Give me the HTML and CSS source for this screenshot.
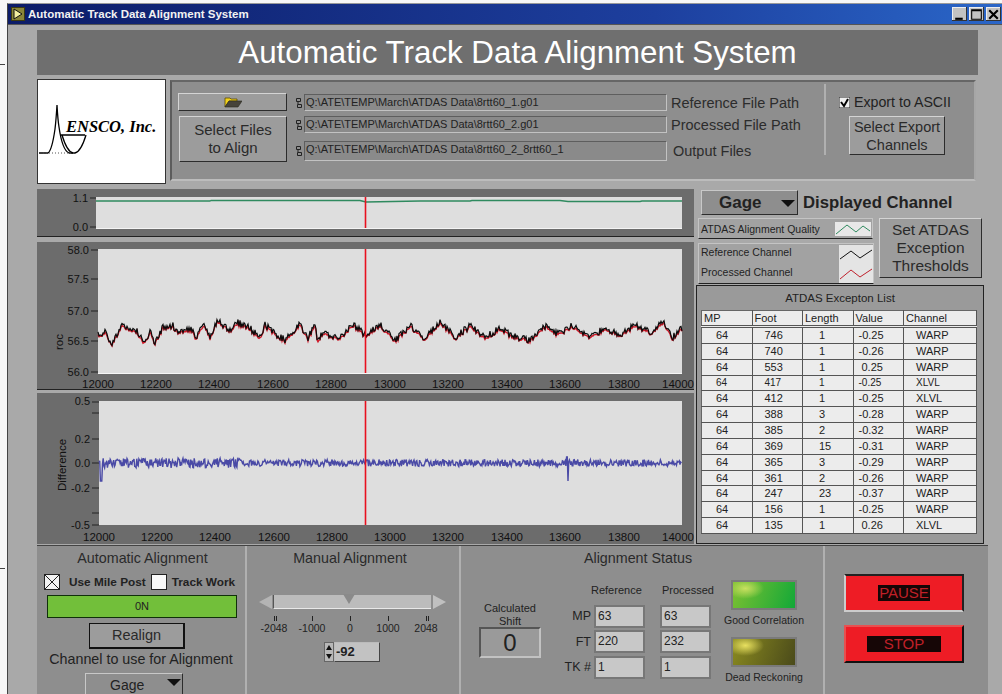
FILE: index.html
```html
<!DOCTYPE html>
<html lang="en">
<head>
    <meta charset="UTF-8">
    <title>Automatic Track Data Alignment System</title>
    <link rel="stylesheet" href="styles.css">
</head>
<body>
<div class="window">
    <div class="titlebar">
        <svg class="app-icon" viewBox="0 0 14 14"><rect width="14" height="14" fill="#3c3a10"/><rect x="1" y="1" width="12" height="12" fill="#8a8638"/><path d="M3 2l8 5-8 5z" fill="#f4f0a0" stroke="#111" stroke-width="1"/></svg>
        <span class="title-text">Automatic Track Data Alignment System</span>
        <div class="win-buttons">
            <div class="win-btn"><svg viewBox="0 0 14 14"><rect x="3" y="10" width="7" height="2" fill="#000"/></svg></div>
            <div class="win-btn"><svg viewBox="0 0 14 14"><path d="M2.500 2.500h9v9h-9z M2.500 3.500h9" fill="none" stroke="#000"/></svg></div>
            <div class="win-btn"><svg viewBox="0 0 14 14"><path d="M3 3l8 8M11 3l-8 8" stroke="#000" stroke-width="2"/></svg></div>
        </div>
    </div>

    <div class="content">
        <h1 class="header">Automatic Track Data Alignment System</h1>

        <div class="top-row">
            <div class="logo">
                <svg viewBox="37 79 129 105">
                    <path d="M39 153h9c3-2 5-10 7-24 1-8 1.500-16 2-24 .5 9 1 16 2 22 2 14 5 24 10 26h6c4-1 8-8 11-18" fill="none" stroke="#000" stroke-width="1.300"/>
                    <path d="M61 135h24M62 135c3 10 6 17 11 18" fill="none" stroke="#000" stroke-width="1.300"/>
                    <path d="M43 153h32" stroke="#555" stroke-width="1" stroke-dasharray="1 2"/>
                    <text x="66" y="132" class="logo-text">ENSCO, Inc.</text>
                </svg>
            </div>
            <div class="file-panel">
                <div class="file-buttons">
                    <div class="btn folder-btn">
                        <svg viewBox="0 0 18 11" width="18" height="11"><path d="M1 10V1h5l1 1h6v2H5z" fill="#f2d21c" stroke="#5a4a00" stroke-width=".8"/><path d="M1 10l4-6h13l-4 6z" fill="#46433a" stroke="#2a2a20" stroke-width=".6"/></svg>
                    </div>
                    <div class="btn select-btn">Select Files<br>to Align</div>
                </div>
                <div class="paths">
                    <div class="path-row">
                        <svg class="path-icon" viewBox="0 0 8 12"><path d="M1.500 1.500h4v3h-4zM3 4.500v2.500M2.500 7.500h4v3h-4z" fill="none" stroke="#222"/></svg>
                        <div class="path-field">Q:\ATE\TEMP\March\ATDAS Data\8rtt60_1.g01</div>
                        <span class="path-label">Reference File Path</span>
                    </div>
                    <div class="path-row">
                        <svg class="path-icon" viewBox="0 0 8 12"><path d="M1.500 1.500h4v3h-4zM3 4.500v2.500M2.500 7.500h4v3h-4z" fill="none" stroke="#222"/></svg>
                        <div class="path-field">Q:\ATE\TEMP\March\ATDAS Data\8rtt60_2.g01</div>
                        <span class="path-label">Processed File Path</span>
                    </div>
                    <div class="path-row path-row-output">
                        <svg class="path-icon" viewBox="0 0 8 12"><path d="M1.500 1.500h4v3h-4zM3 4.500v2.500M2.500 7.500h4v3h-4z" fill="none" stroke="#222"/></svg>
                        <div class="path-field">Q:\ATE\TEMP\March\ATDAS Data\8rtt60_2_8rtt60_1</div>
                        <span class="path-label output-label">Output Files</span>
                    </div>
                </div>
                <div class="export-box">
                    <div class="export-check">
                        <svg class="checkbox" viewBox="0 0 11 11"><rect width="11" height="11" fill="#eee" stroke="#222"/><path d="M2 5l3 4 4-7" fill="none" stroke="#000" stroke-width="2"/></svg>
                        <span>Export to ASCII</span>
                    </div>
                    <div class="btn export-btn">Select Export<br>Channels</div>
                </div>
            </div>
        </div>

        <div class="middle">
            <div class="charts">
                <div class="chart chart-quality">
                    <svg viewBox="37 189 657 47">
                        <rect x="96" y="197" width="586" height="31" fill="#dedede"/>
                        <path d="M96 228.500h586" stroke="#f4f4f4"/>
                        <g class="ticks" stroke="#222"><path d="M90 198h6M90 227h6"/></g>
                        <text class="y-label" x="88" y="202">1.1</text>
                        <text class="y-label" x="88" y="231">0.0</text>
                        <polyline id="trace-quality" fill="none" stroke="#2f8a5f" stroke-width="1.300"/>
                        <path class="cursor" d="M365.500 197v31"/>
                    </svg>
                </div>
                <div class="chart chart-roc">
                    <svg viewBox="37 242 657 147">
                        <rect x="98" y="249" width="584" height="124" fill="#dedede"/>
                        <path d="M98 373.500h584" stroke="#f6f6f6"/>
                        <path d="M91 250h7M91 279h7M91 311h7M91 341h7M91 372h7" stroke="#222"/>
                        <text class="y-label" x="89" y="254">58.0</text>
                        <text class="y-label" x="89" y="283">57.5</text>
                        <text class="y-label" x="89" y="315">57.0</text>
                        <text class="y-label" x="89" y="345">56.5</text>
                        <text class="y-label" x="89" y="376">56.0</text>
                        <text class="axis-name" transform="translate(63 342) rotate(-90)">roc</text>
                        <g class="x-labels">
                            <text x="98" y="388">12000</text><text x="156" y="388">12200</text><text x="214" y="388">12400</text><text x="273" y="388">12600</text><text x="331" y="388">12800</text><text x="390" y="388">13000</text><text x="448" y="388">13200</text><text x="507" y="388">13400</text><text x="565" y="388">13600</text><text x="624" y="388">13800</text><text x="678" y="388">14000</text>
                        </g>
                        <polyline id="trace-processed" fill="none" stroke="#d01828" stroke-width="1.400"/>
                        <polyline id="trace-reference" fill="none" stroke="#0c0c0c" stroke-width="1.200"/>
                        <path class="cursor" d="M365.500 249v124"/>
                    </svg>
                </div>
                <div class="chart chart-diff">
                    <svg viewBox="37 393 657 151">
                        <rect x="99" y="401" width="583" height="124" fill="#dedede"/>
                        <path d="M92 402h7M92 413h7M92 439h7M92 463h7M92 488h7M92 513h7M92 525h7" stroke="#222"/>
                        <text class="y-label" x="90" y="405">0.5</text>
                        <text class="y-label" x="90" y="443">0.2</text>
                        <text class="y-label" x="90" y="467">0.0</text>
                        <text class="y-label" x="90" y="492">-0.2</text>
                        <text class="y-label" x="90" y="529">-0.5</text>
                        <text class="axis-name" transform="translate(66 465) rotate(-90)">Difference</text>
                        <g class="x-labels">
                            <text x="99" y="541">12000</text><text x="157" y="541">12200</text><text x="215" y="541">12400</text><text x="274" y="541">12600</text><text x="332" y="541">12800</text><text x="390" y="541">13000</text><text x="448" y="541">13200</text><text x="507" y="541">13400</text><text x="565" y="541">13600</text><text x="624" y="541">13800</text><text x="678" y="541">14000</text>
                        </g>
                        <polyline id="trace-diff" fill="none" stroke="#4a4aa6" stroke-width="1.400"/>
                        <path class="cursor" d="M365.500 401v124"/>
                    </svg>
                </div>
            </div>

            <div class="side">
                <div class="channel-row">
                    <div class="dropdown channel-dropdown">Gage<i class="arrow"></i></div>
                    <span class="channel-label">Displayed Channel</span>
                </div>
                <div class="legend-row">
                    <div class="legends">
                        <div class="legend legend-quality">
                            <span>ATDAS Alignment Quality</span>
                            <svg viewBox="0 0 36 14" class="legend-swatch"><rect width="36" height="14" fill="#e8e8e8"/><path d="M1 12l11-9 9 7 7-6 7 5" fill="none" stroke="#2f8a5f"/></svg>
                        </div>
                        <div class="legend legend-channels">
                            <div class="legend-names"><span>Reference Channel</span><span>Processed Channel</span></div>
                            <svg viewBox="0 0 34 38" class="legend-swatch-tall"><rect width="34" height="38" fill="#e4e4e4"/><path d="M1 14l11-8 9 7 6-4 6-4" fill="none" stroke="#111"/><path d="M1 34l11-9 9 7 6-4 6-4" fill="none" stroke="#c0202c"/></svg>
                        </div>
                    </div>
                    <div class="btn thresholds-btn">Set ATDAS<br>Exception<br>Thresholds</div>
                </div>

                <div class="exception-panel">
                    <div class="exception-title">ATDAS Excepton List</div>
                    <table class="exception-table">
                        <thead>
                            <tr><th>MP</th><th>Foot</th><th>Length</th><th>Value</th><th>Channel</th></tr>
                        </thead>
                        <tbody>
                            <tr><td>64</td><td>746</td><td>1</td><td>-0.25</td><td>WARP</td></tr>
                            <tr><td>64</td><td>740</td><td>1</td><td>-0.26</td><td>WARP</td></tr>
                            <tr><td>64</td><td>553</td><td>1</td><td class="pos">0.25</td><td>WARP</td></tr>
                            <tr class="small-row"><td>64</td><td>417</td><td>1</td><td>-0.25</td><td>XLVL</td></tr>
                            <tr><td>64</td><td>412</td><td>1</td><td>-0.25</td><td>XLVL</td></tr>
                            <tr><td>64</td><td>388</td><td>3</td><td>-0.28</td><td>WARP</td></tr>
                            <tr><td>64</td><td>385</td><td>2</td><td>-0.32</td><td>WARP</td></tr>
                            <tr><td>64</td><td>369</td><td>15</td><td>-0.31</td><td>WARP</td></tr>
                            <tr><td>64</td><td>365</td><td>3</td><td>-0.29</td><td>WARP</td></tr>
                            <tr><td>64</td><td>361</td><td>2</td><td>-0.26</td><td>WARP</td></tr>
                            <tr><td>64</td><td>247</td><td>23</td><td>-0.37</td><td>WARP</td></tr>
                            <tr><td>64</td><td>156</td><td>1</td><td>-0.25</td><td>WARP</td></tr>
                            <tr><td>64</td><td>135</td><td>1</td><td class="pos">0.26</td><td>XLVL</td></tr>
                        </tbody>
                    </table>
                </div>
            </div>
        </div>

        <div class="bottom">
            <section class="section auto-section">
                <div class="section-title">Automatic Alignment</div>
                <div class="mode-row">
                    <svg class="mode-box" viewBox="0 0 16 16"><rect x=".5" y=".5" width="15" height="15" fill="#f2f2f2" stroke="#222"/><path d="M1 1l14 14M15 1L1 15" stroke="#222"/></svg>
                    <span class="mode-text first">Use Mile Post</span>
                    <svg class="mode-box" viewBox="0 0 16 16"><rect x=".5" y=".5" width="15" height="15" fill="#fafafa" stroke="#222"/></svg>
                    <span class="mode-text">Track Work</span>
                </div>
                <div class="on-bar">0N</div>
                <div class="btn realign-btn">Realign</div>
                <div class="channel-use">Channel to use for Alignment</div>
                <div class="dropdown align-dropdown">Gage<i class="arrow"></i></div>
            </section>

            <section class="section manual-section">
                <div class="section-title">Manual Alignment</div>
                <div class="slider">
                    <i class="slider-left"></i>
                    <div class="slider-track"><i class="slider-thumb"></i></div>
                    <i class="slider-right"></i>
                </div>
                <div class="slider-scale">
                    <span class="end-tick">-2048</span><span>-1000</span><span>0</span><span>1000</span><span class="end-tick">2048</span>
                </div>
                <div class="numeric">
                    <div class="spinner"><i class="spin-up"></i><i class="spin-down"></i></div>
                    <div class="numeric-field">-92</div>
                </div>
            </section>

            <section class="section status-section">
                <div class="section-title">Alignment Status</div>
                <div class="status-body">
                    <div class="shift">
                        <div class="shift-label">Calculated<br>Shift</div>
                        <div class="shift-value">0</div>
                    </div>
                    <div class="status-grid">
                        <span></span><span class="col-head col-head-ref">Reference</span><span class="col-head">Processed</span>
                        <span class="row-head">MP</span><div class="status-field">63</div><div class="status-field">63</div>
                        <span class="row-head">FT</span><div class="status-field">220</div><div class="status-field">232</div>
                        <span class="row-head">TK #</span><div class="status-field">1</div><div class="status-field">1</div>
                    </div>
                    <div class="leds">
                        <div class="led led-green"></div>
                        <span class="led-label">Good Correlation</span>
                        <div class="led led-olive"></div>
                        <span class="led-label">Dead Reckoning</span>
                    </div>
                </div>
            </section>

            <section class="section control-section">
                <div class="control-btn pause-btn"><span>PAUSE</span></div>
                <div class="control-btn stop-btn"><span>STOP</span></div>
            </section>
        </div>
    </div>
</div>
<script src="charts.js"></script>
</body>
</html>
```

FILE: styles.css
```css
html, body {
    margin: 0;
    height: 694px;
    overflow: hidden;
    background: #f7f7f7;
}
body {
    font-family: "Liberation Sans", Arial, sans-serif;
    color: #222;
    /* stray marks left of the window in the screenshot */
    background-image: linear-gradient(#444, #444), linear-gradient(#444, #444);
    background-repeat: no-repeat;
    background-size: 5px 1px;
    background-position: 0 64px, 0 568px;
}
.window {
    margin: 3px 0 0 7px;
    height: 691px;
    box-sizing: border-box;
    background: #a9a9a9;
    border-left: 1px solid #444;
    border-top: 1px solid #999;
    position: relative;
}
.titlebar {
    height: 21px;
    display: flex;
    align-items: center;
    background: linear-gradient(to right, #0c1c68, #1d3f9e 65%, #2a66c8);
    border-bottom: 1px solid #555;
    box-sizing: border-box;
    padding: 0 1px 0 3px;
}
.app-icon {
    width: 14px;
    height: 14px;
}
.title-text {
    margin-left: 3px;
    color: #f2f2f2;
    font-size: 11.500px;
    font-weight: bold;
}
.win-buttons {
    margin-left: auto;
    display: flex;
    gap: 2px;
}
.win-btn {
    width: 15px;
    height: 14px;
    background: #c2c2c2;
    box-shadow: inset -1px -1px 0 #333, inset 1px 1px 0 #eee;
}
.win-btn svg {
    display: block;
}
.content {
    padding: 5px 0 0 29px;
}
.header {
    margin: 0;
    box-sizing: border-box;
    width: 941px;
    height: 45px;
    padding-left: 20px;
    background: #6f6f6f;
    color: #fff;
    font-size: 31.300px;
    font-weight: normal;
    line-height: 45px;
    text-align: center;
}
.top-row {
    display: flex;
    gap: 4px;
    margin-top: 4px;
    height: 105px;
}
.logo {
    width: 129px;
    height: 105px;
    background: #fff;
    box-sizing: border-box;
    box-shadow: inset 0 0 0 1px #333;
}
.logo svg {
    display: block;
    width: 129px;
    height: 105px;
}
.logo-text {
    font-family: "Liberation Serif", serif;
    font-size: 16.500px;
    font-weight: bold;
    font-style: italic;
    fill: #000;
}
.file-panel {
    width: 806px;
    height: 101px;
    margin-top: 1px;
    box-sizing: border-box;
    display: flex;
    background: #8e8e8e;
    border-left: 2px solid #5c5c5c;
    border-top: 2px solid #666;
    border-right: 2px solid #a6a6a6;
    border-bottom: 2px solid #bcbcbc;
    padding-left: 6px;
}
.btn {
    box-sizing: border-box;
    background: #9c9c9c;
    border: 1px solid;
    border-color: #d4d4d4 #2c2c2c #2c2c2c #d4d4d4;
    text-align: center;
    color: #2a2a2a;
}
.file-buttons {
    width: 109px;
    padding-top: 11px;
}
.folder-btn {
    height: 18px;
    display: flex;
    align-items: center;
    justify-content: center;
}
.select-btn {
    margin: 5px 0 0 1px;
    height: 46px;
    font-size: 15px;
    line-height: 18px;
    padding-top: 4px;
}
.paths {
    width: 516px;
    margin-left: 8px;
    padding-top: 12px;
}
.path-row {
    display: flex;
    align-items: center;
    height: 17px;
    margin-bottom: 5px;
}
.path-row-output {
    height: 20px;
    margin-top: 8px;
}
.path-icon {
    width: 8px;
    height: 12px;
    flex: none;
    margin-right: 1px;
}
.path-field {
    width: 363px;
    height: 100%;
    box-sizing: border-box;
    background: #8a8a8a;
    border: 1px solid;
    border-color: #5e5e5e #c2c2c2 #c2c2c2 #5e5e5e;
    font-size: 11px;
    line-height: 15px;
    padding-left: 1px;
    white-space: nowrap;
}
.path-label {
    margin-left: 4px;
    font-size: 14.500px;
    color: #2c2c2c;
    white-space: nowrap;
}
.output-label {
    margin-left: 6px;
}
.export-box {
    margin-left: 13px;
    padding: 10px 0 0 13px;
    border-left: 2px solid #b0b0b0;
    height: 61px;
    margin-top: 2px;
}
.export-check {
    display: flex;
    align-items: center;
    gap: 4px;
    font-size: 14.200px;
    white-space: nowrap;
}
.checkbox {
    width: 11px;
    height: 11px;
}
.export-btn {
    width: 96px;
    height: 39px;
    margin: 6px 0 0 10px;
    font-size: 14.500px;
    line-height: 18px;
    padding-top: 1px;
}
.middle {
    display: flex;
    margin-top: 5px;
    height: 355px;
}
.charts {
    width: 657px;
    flex: none;
}
.chart {
    background: #6c6c6c;
    border-bottom: 1px solid #222;
}
.chart svg {
    display: block;
    width: 657px;
    height: 100%;
}
.chart-quality {
    height: 47px;
}
.chart-roc {
    height: 147px;
    margin-top: 5px;
}
.chart-diff {
    height: 151px;
    margin-top: 3px;
    border-bottom: 0;
}
.cursor {
    stroke: #e8101e;
    stroke-width: 1.600;
}
.y-label {
    font-size: 11px;
    text-anchor: end;
    fill: #111;
}
.axis-name {
    font-size: 11.500px;
    text-anchor: middle;
    fill: #111;
}
.x-labels text {
    font-size: 11.500px;
    text-anchor: middle;
    fill: #111;
}
.side {
    width: 292px;
    padding-top: 1px;
}
.channel-row {
    display: flex;
    align-items: center;
    height: 25px;
    margin-left: 7px;
}
.dropdown {
    box-sizing: border-box;
    position: relative;
    background: #8e8e8e;
    border: 1px solid;
    border-color: #c8c8c8 #2c2c2c #2c2c2c #c8c8c8;
}
.channel-dropdown {
    width: 97px;
    height: 25px;
    font-size: 17px;
    font-weight: bold;
    line-height: 24px;
    padding-left: 17px;
}
.arrow {
    position: absolute;
    right: 2px;
    top: 9px;
    border-left: 7px solid transparent;
    border-right: 7px solid transparent;
    border-top: 7px solid #111;
}
.channel-label {
    margin-left: 5px;
    font-size: 16.700px;
    font-weight: bold;
    white-space: nowrap;
}
.legend-row {
    display: flex;
    margin: 3px 0 0 4px;
}
.legends {
    width: 176px;
}
.legend {
    box-sizing: border-box;
    display: flex;
    align-items: center;
    justify-content: space-between;
    background: #a2a2a2;
    border: 1px solid;
    border-color: #c4c4c4 #c4c4c4 #222 #c4c4c4;
    font-size: 10.500px;
    padding-left: 2px;
}
.legend-quality {
    height: 21px;
    width: 175px;
}
.legend-swatch {
    width: 36px;
    height: 16px;
    margin-right: 1px;
}
.legend-channels {
    height: 41px;
    margin-top: 4px;
}
.legend-names {
    display: flex;
    flex-direction: column;
    gap: 8px;
    padding-bottom: 3px;
}
.legend-swatch-tall {
    width: 34px;
    height: 38px;
}
.thresholds-btn {
    width: 103px;
    height: 60px;
    margin-left: 5px;
    font-size: 15.500px;
    line-height: 18px;
    padding-top: 2px;
}
.exception-panel {
    box-sizing: border-box;
    width: 288px;
    height: 259px;
    margin: 1px 0 0 2px;
    background: #9a9a9a;
    border: 1px solid #222;
}
.exception-title {
    height: 24px;
    line-height: 24px;
    text-align: center;
    font-size: 11.500px;
}
.exception-table {
    margin-left: 4px;
    width: 276px;
    table-layout: fixed;
    border-collapse: collapse;
    background: #ececec;
    font-size: 11px;
    border: 1px solid #666;
}
.exception-table th {
    box-sizing: border-box;
    width: 50.500px;
    height: 16px;
    font-weight: normal;
    text-align: left;
    padding: 0 0 0 2px;
    border-right: 1px solid #555;
    border-bottom: 3px double #555;
    font-size: 11px;
}
.exception-table th:last-child {
    width: auto;
}
.exception-table td {
    height: 14.850px;
    padding: 0;
    border-right: 1px solid #555;
    border-bottom: 1px solid #555;
    line-height: 13px;
}
.exception-table td:nth-child(1) { padding-left: 14px; }
.exception-table td:nth-child(2) { padding-left: 12px; }
.exception-table td:nth-child(3) { padding-left: 16px; }
.exception-table td:nth-child(4) { padding-left: 5px; }
.exception-table td:nth-child(5) { padding-left: 12px; }
.exception-table td.pos { padding-left: 8px; }
.small-row td {
    font-size: 10px;
}
.bottom {
    display: flex;
    width: 951px;
    height: 150px;
    margin-top: 1px;
    background: #8e8e8e;
    border-top: 1px solid #444;
    box-sizing: border-box;
}
.section {
    box-sizing: border-box;
    height: 150px;
    border-right: 2px solid #b0b0b0;
    text-align: center;
}
.section-title {
    font-size: 14.300px;
    padding-top: 4px;
    height: 20px;
    color: #2a2a2a;
}
.auto-section {
    width: 210px;
}
.auto-section .section-title {
    padding-left: 3px;
}
.mode-row {
    display: flex;
    align-items: center;
    padding: 3px 0 0 7px;
    height: 18px;
}
.mode-box {
    width: 16px;
    height: 16px;
    flex: none;
}
.mode-text {
    font-size: 11.800px;
    font-weight: bold;
    margin-left: 5px;
    white-space: nowrap;
}
.mode-text.first {
    margin: 0 5px 0 9px;
}
.on-bar {
    box-sizing: border-box;
    width: 190px;
    height: 23px;
    margin: 4px 0 0 10px;
    background: #72bf3a;
    border: 1px solid #10300a;
    font-size: 11px;
    line-height: 21px;
}
.realign-btn {
    width: 96px;
    height: 26px;
    margin: 5px 0 0 52px;
    font-size: 14.500px;
    line-height: 23px;
    border-color: #111;
    border-width: 1px 2px 2px 1px;
}
.channel-use {
    font-size: 14.300px;
    margin-top: 2px;
    white-space: nowrap;
}
.align-dropdown {
    width: 98px;
    height: 24px;
    margin: 6px 0 0 48px;
    font-size: 14px;
    line-height: 22px;
    text-align: left;
    padding-left: 24px;
}
.align-dropdown .arrow {
    top: 5px;
    right: 1px;
}
.manual-section {
    width: 214px;
}
.manual-section .section-title {
    padding-right: 6px;
}
.slider {
    display: flex;
    align-items: center;
    margin: 24px 0 0 12px;
    height: 16px;
}
.slider-left {
    border-top: 7px solid transparent;
    border-bottom: 7px solid transparent;
    border-right: 13px solid #b4b4b4;
    margin-right: 1px;
}
.slider-right {
    border-top: 7px solid transparent;
    border-bottom: 7px solid transparent;
    border-left: 13px solid #c0c0c0;
    margin-left: 2px;
}
.slider-track {
    position: relative;
    width: 158px;
    height: 14px;
    background: #bcbcbc;
    border-bottom: 1px solid #e8e8e8;
    border-left: 1px solid #555;
    box-sizing: border-box;
}
.slider-thumb {
    position: absolute;
    left: 69px;
    top: -1px;
    border-left: 6px solid transparent;
    border-right: 6px solid transparent;
    border-top: 10px solid #8a8a8a;
}
.slider-scale {
    display: grid;
    grid-template-columns: repeat(5, 38px);
    font-size: 10.500px;
    margin: 12px 0 0 8px;
    height: 16px;
}
.slider-scale span {
    position: relative;
}
.slider-scale span::before {
    content: "";
    position: absolute;
    left: 50%;
    top: -6px;
    width: 1px;
    height: 5px;
    background: #222;
}
.slider-scale .end-tick::before {
    width: 1px;
    background: none;
    border-left: 1px solid #222;
    border-right: 1px solid #222;
}
.numeric {
    display: flex;
    margin: 4px 0 0 77px;
    height: 20px;
}
.spinner {
    width: 8px;
    display: flex;
    flex-direction: column;
    align-items: center;
    justify-content: space-around;
    background: #b8b8b8;
    border: 1px solid #666;
}
.spin-up {
    border-left: 3px solid transparent;
    border-right: 3px solid transparent;
    border-bottom: 5px solid #111;
}
.spin-down {
    border-left: 3px solid transparent;
    border-right: 3px solid transparent;
    border-top: 5px solid #111;
}
.numeric-field {
    box-sizing: border-box;
    width: 46px;
    background: #c2c2c2;
    border: 1px solid;
    border-color: #bbb #444 #444 #bbb;
    font-size: 13px;
    font-weight: bold;
    line-height: 18px;
    text-align: left;
    padding-left: 1px;
}
.status-section {
    width: 364px;
}
.status-section .section-title {
    padding-right: 8px;
}
.status-body {
    display: flex;
}
.shift {
    width: 62px;
    margin: 32px 0 0 18px;
    font-size: 11px;
    line-height: 13px;
}
.shift-value {
    box-sizing: border-box;
    height: 31px;
    margin-top: -1px;
    background: #9a9a9a;
    border: 2px solid;
    border-color: #555 #c2c2c2 #c2c2c2 #555;
    font-size: 24px;
    line-height: 27px;
}
.status-grid {
    display: grid;
    grid-template-columns: 32px 47px 47px;
    grid-template-rows: 20px 19px 19px 19px;
    column-gap: 19px;
    row-gap: 6.500px;
    margin: 10px 0 0 4px;
    width: 164px;
    align-items: center;
}
.status-grid .row-head {
    font-size: 12.500px;
    text-align: right;
    margin-right: -14px;
    white-space: nowrap;
}
.col-head {
    font-size: 11px;
    white-space: nowrap;
    text-align: left;
}
.col-head-ref {
    margin-left: -5px;
}
.status-field {
    box-sizing: border-box;
    height: 19px;
    background: #c8c8c8;
    box-shadow: 0 0 0 2px #777;
    font-size: 12px;
    line-height: 19px;
    text-align: left;
    padding-left: 2px;
}
.leds {
    width: 86px;
    margin: 10px 0 0 12px;
    display: flex;
    flex-direction: column;
    align-items: center;
}
.led {
    box-sizing: border-box;
    width: 66px;
    height: 30px;
    border: 2px solid #7a7a7a;
}
.led-green {
    background: radial-gradient(ellipse 30% 40% at 20% 25%, #c8e060, transparent), linear-gradient(110deg, #7ec032, #12a838);
}
.led-olive {
    background: radial-gradient(ellipse 30% 40% at 20% 25%, #e8e060, transparent), linear-gradient(110deg, #8a8a20, #4a4a1a);
}
.led-label {
    font-size: 10.500px;
    white-space: nowrap;
    height: 27px;
    line-height: 20px;
}
.control-section {
    flex: 1;
    border-right: 0;
    padding: 28px 0 0 19px;
}
.control-btn {
    box-sizing: border-box;
    width: 120px;
    height: 38px;
    background: #ee1c25;
    display: flex;
    align-items: center;
    justify-content: center;
    font-size: 15px;
    color: #c02028;
}
.control-btn span {
    background: #160606;
    padding: 0 1px;
    line-height: 16px;
}
.pause-btn {
    border: 2px solid;
    border-color: #222 #222 #ccc #ccc;
}
.stop-btn {
    margin-top: 13px;
    border: 2px solid;
    border-color: #e85050 #111 #111 #e85050;
}
.stop-btn span {
    padding: 0 17px;
}
```

FILE: charts.js
```js
// small seeded random so the traces come out the same every time
let seed = 4711;
function rnd() {
    seed = (seed * 16807) % 2147483647;
    return seed / 2147483647;
}

function setPoints(id, points) {
    document.getElementById(id).setAttribute("points", points.map(p => p[0].toFixed(1) + "," + p[1].toFixed(1)).join(" "));
}

// rough shape of the reference channel, read off the screenshot [x, y]
const anchors = [
    [98, 335], [105, 332], [112, 343], [122, 325], [130, 329], [137, 331], [143, 342], [150, 332],
    [155, 342], [163, 327], [172, 325], [178, 331], [193, 330], [195, 338], [200, 331], [205, 325],
    [210, 338], [217, 320], [230, 330], [238, 323], [250, 328], [260, 338], [265, 325], [273, 332],
    [285, 340], [300, 324], [308, 338], [315, 325], [318, 342], [322, 333], [340, 338], [353, 324],
    [365, 335], [380, 325], [395, 340], [410, 326], [425, 338], [440, 322], [455, 337], [470, 326],
    [485, 338], [500, 328], [512, 336], [530, 340], [545, 326], [558, 334], [572, 326], [590, 337],
    [605, 328], [620, 334], [636, 325], [650, 332], [664, 322], [672, 338], [682, 328]
];

function interp(x) {
    for (let i = 0; i < anchors.length - 1; i++) {
        if (x <= anchors[i + 1][0]) {
            let t = (x - anchors[i][0]) / (anchors[i + 1][0] - anchors[i][0]);
            return anchors[i][1] + (anchors[i + 1][1] - anchors[i][1]) * t;
        }
    }
    return anchors[anchors.length - 1][1];
}

let reference = [];
let processed = [];
for (let x = 98; x <= 682; x += 1) {
    let y = interp(x);
    let wiggle = (rnd() - 0.5) * 7;
    reference.push([x, y + wiggle]);
    processed.push([x, y + wiggle * 0.6 + 1.5]);
}
setPoints("trace-reference", reference);
setPoints("trace-processed", processed);

let diff = [];
for (let x = 99; x <= 682; x += 0.7) {
    let spread = x < 240 ? 10 : 7;
    let y = 463 + (rnd() - 0.5) * spread;
    if (x > 100 && x < 102) y = 481;
    if (x > 567.5 && x < 568.5) y = 481;
    if (x > 566.5 && x < 567.5) y = 457;
    diff.push([x, y]);
}
setPoints("trace-diff", diff);

setPoints("trace-quality", [
    [96, 201], [210, 201], [211, 200.500], [360, 200.500], [366, 202], [420, 201], [470, 201], [472, 200.500],
    [560, 200.500], [568, 201.500], [640, 201.500], [642, 201], [682, 201]
]);
```
